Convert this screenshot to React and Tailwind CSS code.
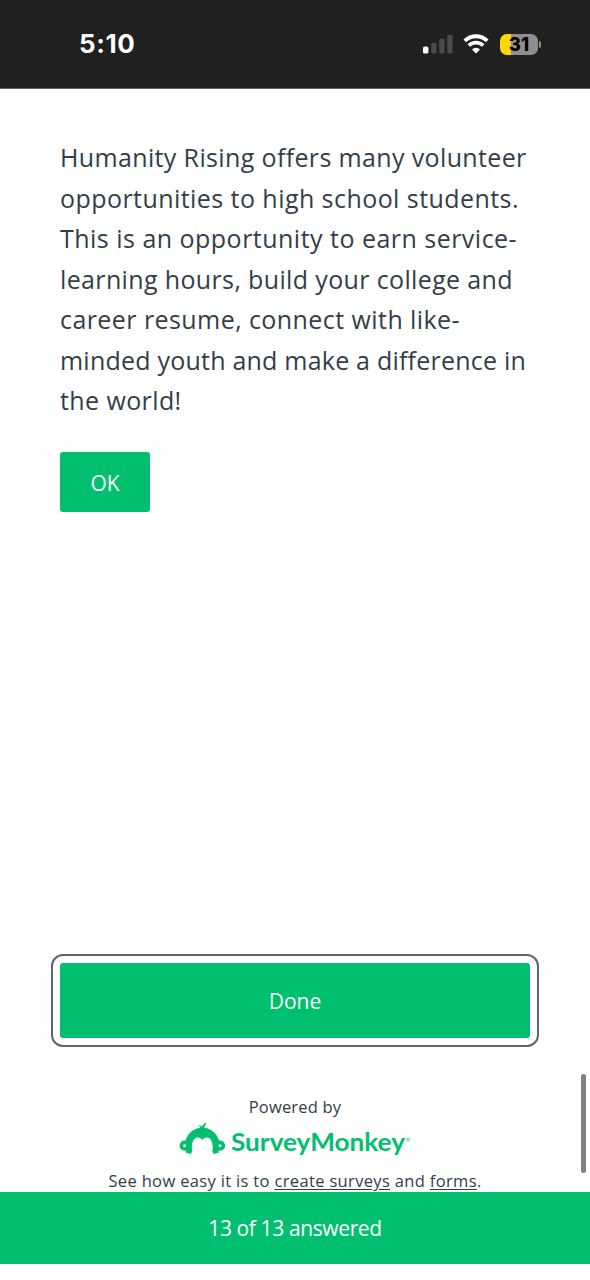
import React from 'react';

const questionLines = [
  { text: 'Humanity Rising offers many volunteer', tracking: 'tracking-[0.36px]' },
  { text: 'opportunities to high school students.', tracking: 'tracking-[0.44px]' },
  { text: 'This is an opportunity to earn service-', tracking: 'tracking-[0.48px]' },
  { text: 'learning hours, build your college and', tracking: 'tracking-[0.36px]' },
  { text: 'career resume, connect with like-', tracking: 'tracking-[0.43px]' },
  { text: 'minded youth and make a difference in', tracking: 'tracking-[0.22px]' },
  { text: 'the world!', tracking: 'tracking-[0.4px]' },
];

const StatusBar = () => (
  <header className="flex h-[89px] shrink-0 items-start justify-between border-b border-[#626262] bg-[#202020] pt-[30px] pr-[49px] pl-[79px] text-white">
    <span className="font-['Inter'] text-[26px] leading-7 font-bold tracking-[0.6px]">5:10</span>
    <div className="flex h-7 items-center">
      <svg width="30" height="20" viewBox="0 0 30 20">
        <rect x="0" y="12.5" width="5.4" height="7" rx="1.5" fill="#fff" />
        <rect x="8.2" y="9" width="5.4" height="10.5" rx="1.5" fill="#4b4b4b" />
        <rect x="16.2" y="4.8" width="5.4" height="14.7" rx="1.5" fill="#4b4b4b" />
        <rect x="24.2" y="1" width="5.4" height="18.5" rx="1.5" fill="#4b4b4b" />
      </svg>
      <svg className="ml-[10px]" width="26" height="20" viewBox="0 0 26 20" fill="none" stroke="#fff">
        <path d="M1.8 6.800a16 16 0 0 1 22.400 0" strokeWidth="3.900" />
        <path d="M5.800 11.600a10.200 10.200 0 0 1 14.400 0" strokeWidth="3.600" />
        <path d="M13 19.500 9 15.400a5.700 5.700 0 0 1 8 0Z" fill="#fff" stroke="none" />
      </svg>
      <div className="ml-[11px] flex items-center">
        <div className="flex h-[21px] w-[38px] items-center justify-center rounded-[7px] bg-[linear-gradient(90deg,#ffd60a_0_11px,#8f8f8f_11px)]">
          <span className="font-['Inter'] text-[18.5px] leading-none font-extrabold text-black">31</span>
        </div>
        <div className="ml-px h-[7px] w-[2px] rounded-r-full bg-[#8f8f8f]" />
      </div>
    </div>
  </header>
);

const SurveyMonkeyLogo = () => (
  <svg className="mt-[3px]" width="232" height="40" viewBox="0 0 232 40" fill="#00bf6f">
    {/* Head and brow */}
    <path d="M6.500 18.500C9.200 10.300 15.500 5.700 23.300 5.700S37.400 10.300 40.100 18.500L38 24 40 30.600 34.800 32 33.200 28.800C34 26.800 33.900 25 33.500 23 32.900 18.500 31.200 15.800 28 15.600 25.800 15.500 24.300 16.500 23.300 18 22.300 16.500 20.800 15.500 18.600 15.600 15.400 15.800 13.700 18.500 13.100 23 12.700 25 12.600 26.800 13.400 28.800L11.800 32 6.600 30.600 8.600 24Z" />
    {/* Hair */}
    <path d="M21.500 7C21.500 4.800 20.500 4 18.600 3.600 20.800 3 22.300 3.700 23.200 4.700 23.700 2.600 25.200 1.200 27.300 0.700L27.200 2.200C25.700 3.100 25.300 4.600 25.500 7Z" />
    {/* Ears */}
    <circle cx="5.600" cy="23.700" r="3.300" fill="none" stroke="#00bf6f" strokeWidth="3.600" />
    <circle cx="41" cy="23.700" r="3.300" fill="none" stroke="#00bf6f" strokeWidth="3.600" />
    <text x="52" y="28.500" fontFamily="Lato, sans-serif" fontSize="24.500" fontWeight="700" textLength="174" lengthAdjust="spacingAndGlyphs">
      SurveyMonkey
    </text>
    <text x="226.500" y="20" fontFamily="Lato, sans-serif" fontSize="6">
      ®
    </text>
  </svg>
);

export default function App() {
  return (
    <div className="relative flex h-[1280px] w-[590px] flex-col overflow-hidden bg-white font-['Open_Sans',sans-serif] text-[#333e48]">
      <StatusBar />

      <main className="flex min-h-0 flex-1 flex-col px-[60px] pt-12">
        <h1 className="text-[25px] leading-[40.5px] font-normal">
          {questionLines.map((line) => (
            <span key={line.text} className={`block whitespace-nowrap ${line.tracking}`}>
              {line.text}
            </span>
          ))}
        </h1>
        <button className="mt-[31.5px] h-[60px] w-[90px] shrink-0 rounded-[3px] bg-[#00bf6f] pt-[3px] text-[21px] text-white">
          OK
        </button>

        <button className="mt-[451px] h-[75px] w-full shrink-0 rounded-[3px] bg-[#00bf6f] pt-[3px] text-[21px] text-white outline-2 outline-offset-[7px] outline-[#5c656d]">
          Done
        </button>

        <div className="mt-[57px] flex flex-col items-center">
          <p className="text-[16.5px] leading-6 tracking-[0.2px]">Powered by</p>
          <SurveyMonkeyLogo />
          <p className="mt-[7px] text-[16.5px] leading-6 tracking-[0.34px] whitespace-nowrap">
            See how easy it is to <a className="underline underline-offset-2">create surveys</a> and{' '}
            <a className="underline underline-offset-2">forms</a>.
          </p>
        </div>
      </main>

      <footer className="mb-4 flex h-[72px] shrink-0 items-center justify-center bg-[#00bf6f] pt-0.5 text-[21px] tracking-[-0.38px] text-white">
        13 of 13 answered
      </footer>

      {/* Scroll thumb */}
      <div className="absolute top-[1074px] right-[4px] h-[99px] w-[5px] rounded-full bg-[#808080]" />
    </div>
  );
}
